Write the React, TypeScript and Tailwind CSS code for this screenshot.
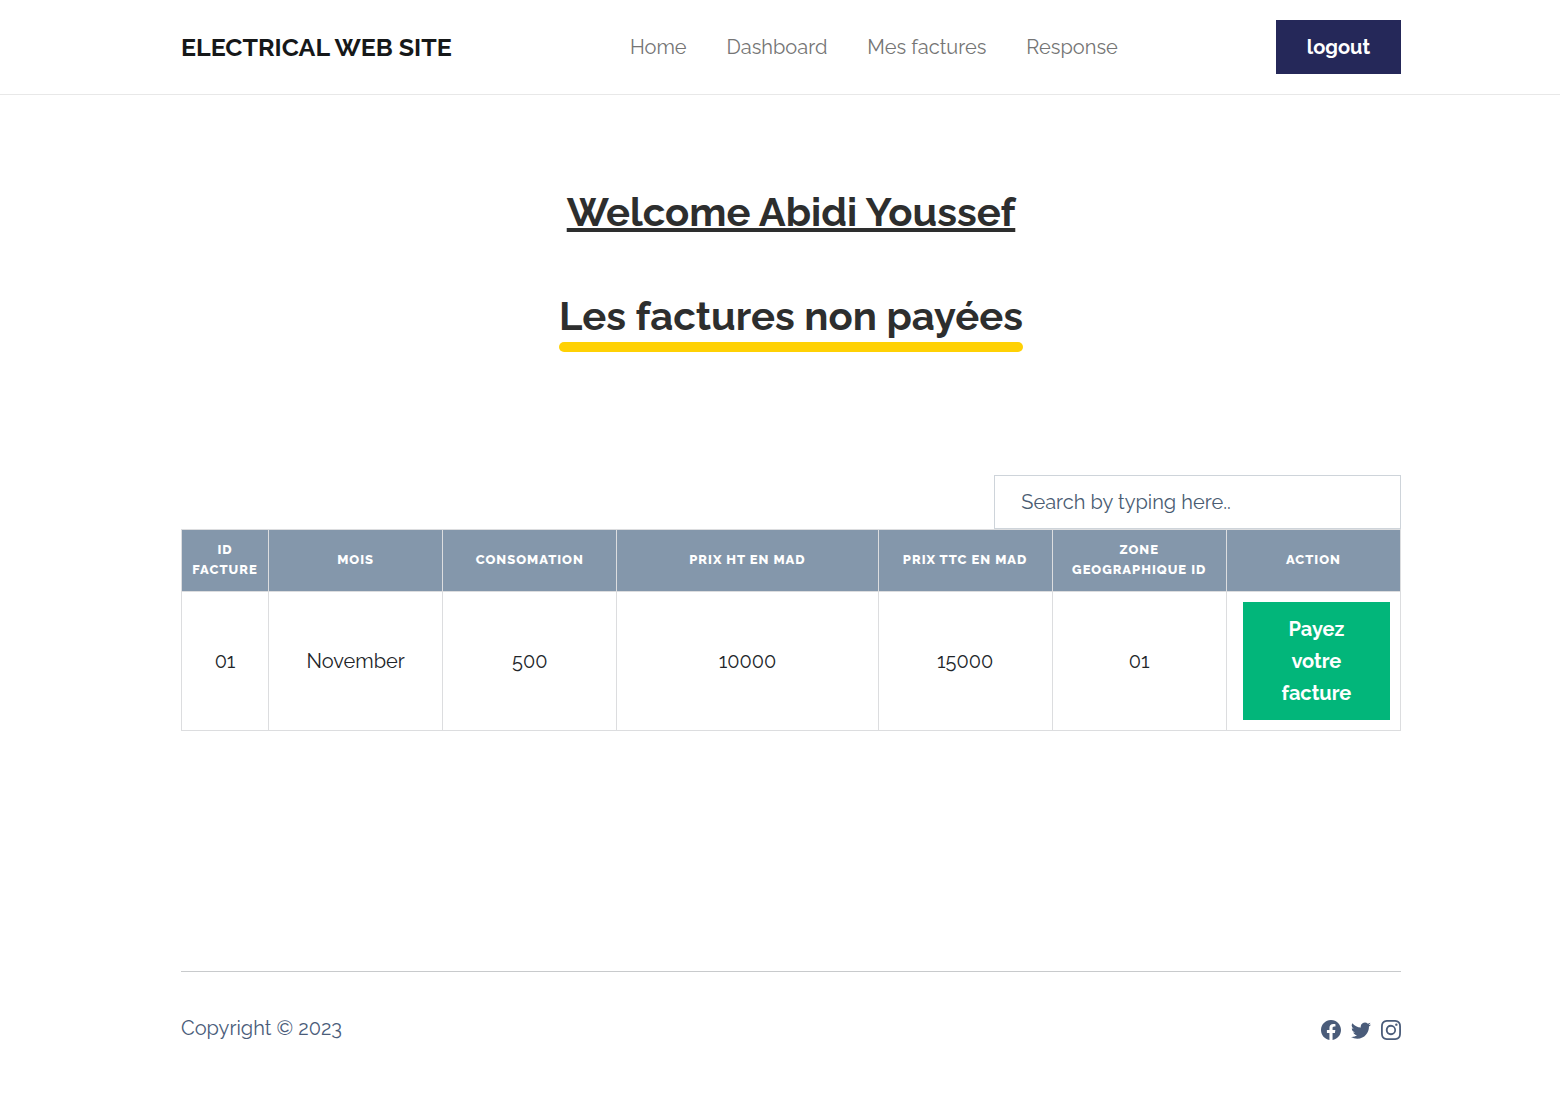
import React from "react";
import { BsFacebook, BsInstagram, BsTwitter } from "react-icons/bs";

const links = ["Home", "Dashboard", "Mes factures", "Response"];

const columns = [
  { label: "ID Facture", width: "w-1/14" },
  { label: "Mois", width: "w-2/14" },
  { label: "Consomation", width: "w-2/14" },
  { label: "Prix HT en MAD", width: "w-3/14" },
  { label: "Prix TTC en MAD", width: "w-2/14" },
  { label: "Zone Geographique ID", width: "w-2/14" },
  { label: "Action", width: "w-2/14" },
];

const invoices = [["01", "November", "500", "10000", "15000", "01"]];

const socials = [
  { label: "Facebook", Icon: BsFacebook },
  { label: "Twitter", Icon: BsTwitter },
  { label: "Instagram", Icon: BsInstagram },
];

function Header() {
  return (
    <header className="border-b border-[#e8e8e8] pl-[22px]">
      <div className="mx-auto flex max-w-[1220px] items-center justify-between py-5">
        <a href="#" className="text-[25px] leading-8 font-bold text-[#161819]">
          ELECTRICAL WEB SITE
        </a>
        <nav className="flex gap-10 pl-5 text-[20px] leading-8 text-[#757575]">
          {links.map((link) => (
            <a key={link} href="#">
              {link}
            </a>
          ))}
        </nav>
        <button type="button" className="w-[125px] bg-[#252859] py-[11px] text-[20px] leading-8 font-bold text-white">
          logout
        </button>
      </div>
    </header>
  );
}

function InvoiceTable() {
  return (
    <table className="w-full table-fixed border-collapse text-center">
      <thead>
        <tr className="bg-[#8497ab] text-[13px] leading-5 tracking-[1px] text-white uppercase">
          {columns.map((column) => (
            <th key={column.label} scope="col" className={`${column.width} h-[62px] border border-[#dcdddf] px-2 pb-[2px] font-extrabold`}>
              {column.label}
            </th>
          ))}
        </tr>
      </thead>
      <tbody>
        {invoices.map((invoice) => (
          <tr key={invoice[0]} className="text-[20px] leading-8 text-[#212529]">
            {invoice.map((value, index) => (
              <td key={index} className="border border-[#dcdddf] p-2.5">
                {value}
              </td>
            ))}
            <td className="border border-[#dcdddf] py-2.5 pr-2.5 pl-4">
              <button type="button" className="block w-full bg-[#02b67a] px-7 py-[11px] font-bold text-white">
                Payez votre facture
              </button>
            </td>
          </tr>
        ))}
      </tbody>
    </table>
  );
}

export default function App() {
  return (
    <div className="min-h-screen bg-white font-['Raleway','Lato',sans-serif]">
      <Header />
      <main className="pl-[22px]">
        <div className="mx-auto max-w-[1220px]">
          <div className="flex flex-col items-center pt-[93px] text-[#2d2e2e]">
            <h1 className="text-[40px] leading-[48px] font-bold underline [text-decoration-skip-ink:none]">
              Welcome Abidi Youssef
            </h1>
            <h2 className="mt-14 text-[40px] leading-[48px] font-bold">
              Les factures non payées
              <span className="mt-0.5 block h-2.5 rounded-full bg-[#ffd104]" />
            </h2>
          </div>
          <div className="mt-[123px] flex justify-end">
            <input
              type="search"
              aria-label="Search invoices"
              placeholder="Search by typing here.."
              className="h-[54px] w-1/3 border border-[#ced4da] px-[26px] text-[20px] leading-8 text-[#212529] placeholder:text-[#4a5c72]"
            />
          </div>
          <InvoiceTable />
        </div>
      </main>
      <footer className="mt-60 pl-[22px] text-[#4a5c7a]">
        <div className="mx-auto flex max-w-[1220px] items-center justify-between border-t border-[#c8cacc] pt-10 pb-[60px]">
          <p className="text-[20px] leading-8">Copyright © 2023</p>
          <div className="flex gap-2.5 pt-1">
            {socials.map(({ label, Icon }) => (
              <a key={label} href="#" aria-label={label}>
                <Icon size={20} />
              </a>
            ))}
          </div>
        </div>
      </footer>
    </div>
  );
}
